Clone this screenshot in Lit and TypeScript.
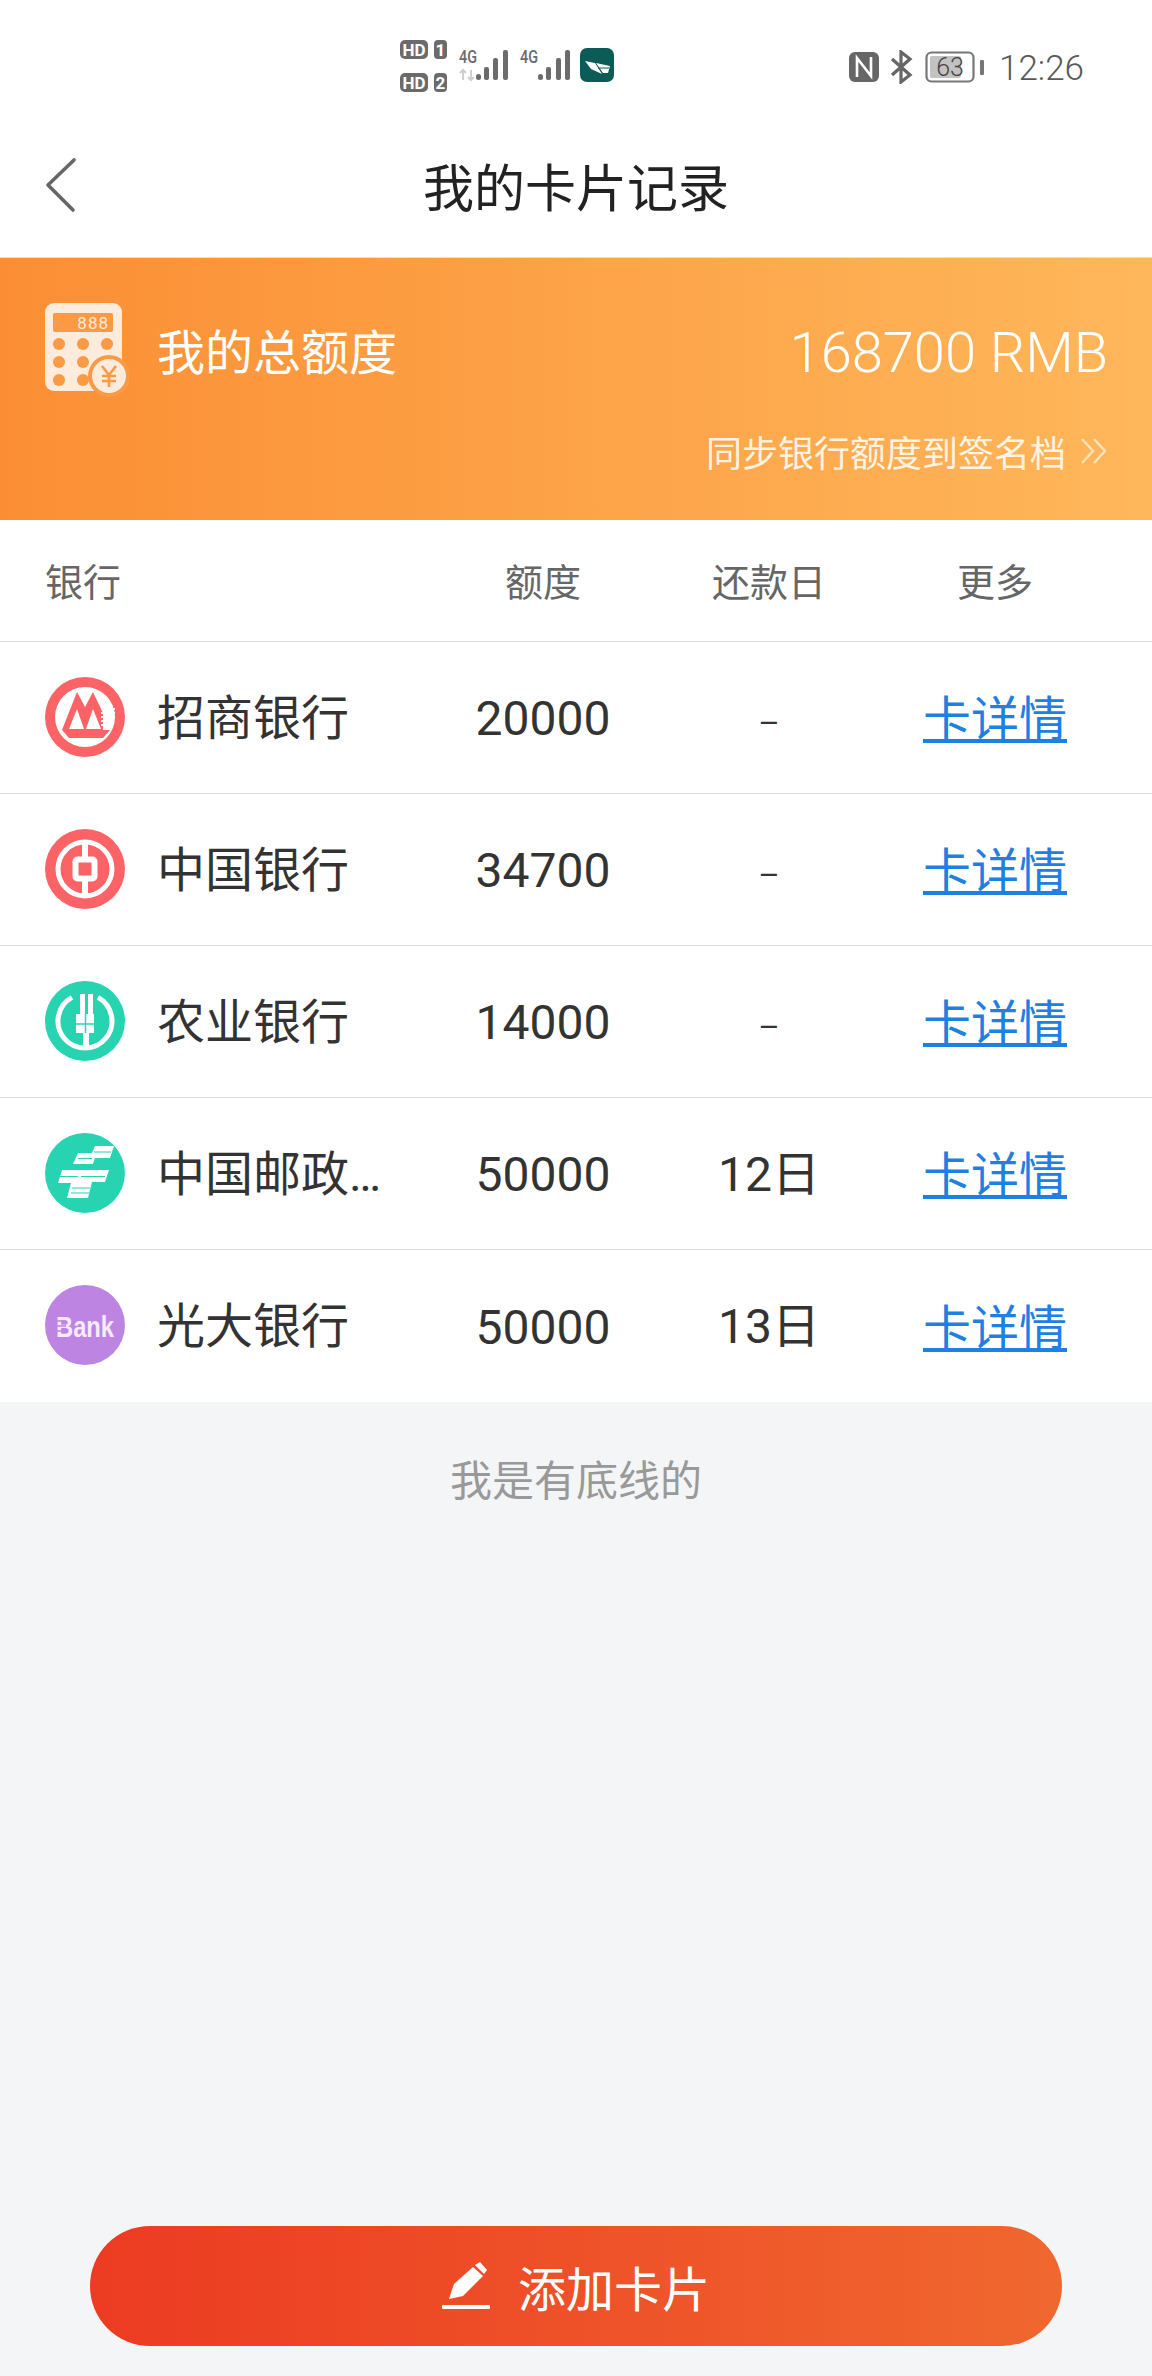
import { LitElement, html, css } from "lit";
import { customElement } from "lit/decorators.js";

const RED = "#fb6366";
const GREEN = "#27d3b1";
const PURPLE = "#bd84e2";

// logos are drawn on an 80x80 box
const logos: Record<string, unknown> = {
  cmb: html`<svg class="logo" viewBox="0 0 80 80">
    <circle cx="40" cy="40" r="40" fill="${RED}" />
    <circle cx="40" cy="40" r="30" fill="#fff" />
    <path d="M17 53 32 15 40 30 48 15 58 36V53L65 53 58 61H24Z" fill="${RED}" />
    <path d="M32 32 24 52H39ZM48 32 41 52H56Z" fill="#fff" />
    <path d="M56 32H70M56 36H70M56 40H70M56 44H69M56 48H67" stroke="#fff" stroke-width="1.8" />
  </svg>`,
  boc: html`<svg class="logo" viewBox="0 0 80 80">
    <circle cx="40" cy="40" r="40" fill="${RED}" />
    <circle cx="40" cy="40" r="27" fill="none" stroke="#fff" stroke-width="5" />
    <path d="M40 12V68" stroke="#fff" stroke-width="6" />
    <rect x="30.5" y="30.5" width="19" height="19" rx="2" fill="${RED}" stroke="#fff" stroke-width="6" />
  </svg>`,
  abc: html`<svg class="logo" viewBox="0 0 80 80">
    <circle cx="40" cy="40" r="40" fill="${GREEN}" />
    <path d="M27 16.4A27 27 0 1 0 53 16.4" fill="none" stroke="#fff" stroke-width="5" />
    <path d="M35 13H40V33H43V13H48V33H49V52H44V68H38V52H31V33H35Z" fill="#fff" />
    <path d="M31 43H49M40.5 33V52" fill="none" stroke="${GREEN}" stroke-width="1.4" />
  </svg>`,
  post: html`<svg class="logo" viewBox="0 0 80 80">
    <circle cx="40" cy="40" r="40" fill="${GREEN}" />
    <path d="M50 13H69L65 25H50L48 31H28L33 20H47ZM17 37H64L60 49H47L43 65H22L26 50H13Z" fill="#fff" />
    <path d="M49 19H66M33 25.5H47M15 43.5H33M36 43.5H60M27 55H45M26 60H44" fill="none" stroke="${GREEN}" stroke-width="1" />
  </svg>`,
  ceb: html`<svg class="logo" viewBox="0 0 80 80">
    <circle cx="40" cy="40" r="40" fill="${PURPLE}" />
    <text class="bank-word" x="11" y="52" textLength="58" lengthAdjust="spacingAndGlyphs">Bank</text>
    <path d="M11 36H21M11 41H21M11 46H21" stroke="${PURPLE}" stroke-width="1.3" />
  </svg>`,
};

const banks = [
  { logo: "cmb", name: "招商银行", limit: "20000", due: "-" },
  { logo: "boc", name: "中国银行", limit: "34700", due: "-" },
  { logo: "abc", name: "农业银行", limit: "14000", due: "-" },
  { logo: "post", name: "中国邮政储蓄银行", limit: "50000", due: "12日" },
  { logo: "ceb", name: "光大银行", limit: "50000", due: "13日" },
];

@customElement("app-root")
export class AppRoot extends LitElement {
  static styles = css`
    :host {
      display: block;
      font-family: "Noto Sans CJK SC", "Noto Sans", sans-serif;
      color: #333;
    }

    .page {
      display: flex;
      flex-direction: column;
      min-height: 2376px;
      background: #f4f5f7;
    }

    .status {
      display: flex;
      align-items: center;
      height: 66px;
      padding: 34px 68px 0 400px;
      background: #fff;
      color: #595959;
    }

    .status-left {
      width: 214px;
      height: 54px;
    }

    .status-right {
      display: flex;
      align-items: center;
      margin-left: auto;
      gap: 11px;
    }

    .time {
      margin: 3px 0 0 3px;
      font-family: Roboto, sans-serif;
      font-size: 35px;
      line-height: 40px;
      font-weight: 300;
    }

    .nav {
      display: grid;
      grid-template-columns: 1fr auto 1fr;
      align-items: center;
      height: 158px;
      padding: 0 45px;
      background: #fff;
      border-bottom: 1px solid #eadfd2;
      box-sizing: border-box;
    }

    .nav-back {
      width: 32px;
      height: 56px;
      margin-top: 12px;
    }

    .nav-title {
      font-size: 51px;
      line-height: 60px;
      color: #222;
      margin-top: 13px;
    }

    .banner {
      height: 262px;
      padding: 45px 44px 0 45px;
      box-sizing: border-box;
      background: linear-gradient(90deg, #fb8e34, #ffb75b);
      color: #fff;
    }

    .banner-top {
      display: flex;
      align-items: flex-start;
    }

    .calc {
      width: 84px;
      height: 94px;
    }

    .banner-title {
      margin-left: 28px;
      font-size: 48px;
      line-height: 92px;
    }

    .banner-total {
      margin-left: auto;
      font-family: Roboto, sans-serif;
      font-weight: 300;
      font-size: 56px;
      line-height: 100px;
    }

    .banner-sync {
      display: flex;
      justify-content: flex-end;
      align-items: center;
      gap: 14px;
      margin-top: 23px;
      font-size: 36px;
      line-height: 50px;
      color: #fff3e2;
    }

    .chevrons {
      width: 28px;
      height: 28px;
    }

    .row {
      display: grid;
      grid-template-columns: 385px 226px 226px 226px;
      align-items: center;
      height: 152px;
      padding: 0 44px 2px 45px;
      background: #fff;
      border-bottom: 1px solid #dcdcdc;
      box-sizing: border-box;
      font-size: 48px;
      text-align: center;
    }

    .row:last-child {
      border-bottom: 0;
    }

    .row.head {
      height: 122px;
      font-size: 38px;
      color: #666;
    }

    .head-bank {
      text-align: left;
    }

    .bank {
      display: flex;
      align-items: center;
      gap: 32px;
      text-align: left;
    }

    .logo {
      flex: none;
      width: 80px;
      height: 80px;
    }

    .bank-word {
      font-family: "Liberation Sans", sans-serif;
      font-size: 30px;
      font-weight: 700;
      fill: #f6eafc;
    }

    .bank-name {
      width: 240px;
      overflow: hidden;
      white-space: nowrap;
      text-overflow: ellipsis;
      font-family: Roboto, "Noto Sans CJK SC", sans-serif;
      line-height: 60px;
      margin-top: 4px;
    }

    .num {
      font-family: Roboto, sans-serif;
      margin-top: 4px;
    }

    .due {
      font-family: Roboto, "Noto Sans CJK SC", sans-serif;
      line-height: 60px;
      margin-top: 4px;
    }

    .dash {
      font-size: 36px;
    }

    .link {
      color: #1f80e2;
      text-decoration: underline;
      margin-bottom: 3px;
    }

    .bottom-line {
      margin-top: 46px;
      font-size: 42px;
      line-height: 60px;
      text-align: center;
      color: #999;
    }

    .add {
      display: flex;
      align-items: center;
      justify-content: center;
      gap: 28px;
      height: 120px;
      margin: auto 90px 30px;
      border-radius: 60px;
      background: linear-gradient(90deg, #ec3b22, #f0672f);
      color: #fff;
      font-size: 48px;
    }

    .pen {
      width: 48px;
      height: 48px;
    }
  `;

  render() {
    return html`
      <div class="page">
        <div class="status">
          <svg class="status-left" viewBox="0 0 214 54" fill="#6b6b6b">
            <rect x="0" y="0" width="28" height="19" rx="5" />
            <rect x="34" y="0" width="13" height="19" rx="4" />
            <rect x="0" y="33" width="28" height="19" rx="5" />
            <rect x="34" y="33" width="13" height="19" rx="4" />
            <g font-family="Roboto, sans-serif" font-weight="700" font-size="17" fill="#fff" text-anchor="middle">
              <text x="14" y="15.5">HD</text>
              <text x="40.5" y="15.5">1</text>
              <text x="14" y="48.5">HD</text>
              <text x="40.5" y="48.5">2</text>
            </g>
            <g font-family="Roboto, sans-serif" font-weight="500" font-size="18">
              <text x="59" y="23" textLength="18" lengthAdjust="spacingAndGlyphs">4G</text>
              <text x="120" y="23" textLength="18" lengthAdjust="spacingAndGlyphs">4G</text>
            </g>
            <path d="M63 30V40M60 33 63 30 66 33M71 30V40M68 37 71 40 74 37" fill="none" stroke="#cfcfcf" stroke-width="2" />
            <rect x="76" y="34" width="5" height="6" rx="2.5" />
            <rect x="84" y="27" width="5" height="13" rx="2" />
            <rect x="93" y="18" width="5" height="22" rx="2" />
            <rect x="103" y="10" width="5" height="30" rx="2" />
            <rect x="138" y="34" width="5" height="6" rx="2.5" />
            <rect x="146" y="27" width="5" height="13" rx="2" />
            <rect x="156" y="18" width="5" height="22" rx="2" />
            <rect x="165" y="10" width="5" height="30" rx="2" />
            <rect x="180" y="8" width="34" height="34" rx="7" fill="#0b5c57" />
            <path d="M185 21 195 23 202 34 191 29ZM196 23 210 26 208 33 203 33Z" fill="#fff" />
            <path d="M198 28 209 28" stroke="#0b5c57" stroke-width="1" />
          </svg>
          <div class="status-right">
            <svg width="30" height="30" viewBox="0 0 30 30">
              <rect width="30" height="30" rx="6" fill="#666" />
              <path d="M8 25V6L22 24V5" fill="none" stroke="#fff" stroke-width="2.6" />
            </svg>
            <svg width="24" height="34" viewBox="0 0 24 34" fill="none" stroke="#666" stroke-width="3.2">
              <path d="M2 9 20 25 11 32V2L20 9 2 25" />
            </svg>
            <svg width="60" height="32" viewBox="0 0 60 32">
              <rect x="1.5" y="1.5" width="47" height="29" rx="5" fill="#fff" stroke="#777" stroke-width="2.2" />
              <rect x="5" y="5" width="31" height="22" rx="2" fill="#c2c2c2" />
              <text x="25" y="25" text-anchor="middle" font-family="Roboto, sans-serif" font-weight="300" font-size="25" fill="#444">63</text>
              <rect x="55" y="9" width="4" height="15" rx="1" fill="#777" />
            </svg>
            <span class="time">12:26</span>
          </div>
        </div>

        <div class="nav">
          <svg class="nav-back" viewBox="0 0 32 56">
            <path d="M29 3 3 28 28 53" fill="none" stroke="#666" stroke-width="3.6" stroke-linecap="round" stroke-linejoin="round" />
          </svg>
          <div class="nav-title">我的卡片记录</div>
        </div>

        <div class="banner">
          <div class="banner-top">
            <svg class="calc" viewBox="0 0 84 94">
              <rect x="0" y="0" width="77" height="88" rx="9" fill="#fdebdc" />
              <rect x="8" y="10" width="60" height="19" rx="2" fill="#fb9a45" />
              <text x="64" y="26" text-anchor="end" font-family="Roboto, sans-serif" font-size="17" letter-spacing="1" fill="#fdebdc">888</text>
              <g fill="#fb9a45">
                <circle cx="14" cy="41" r="6" /><circle cx="38" cy="41" r="6" /><circle cx="62" cy="41" r="6" />
                <circle cx="14" cy="59" r="6" /><circle cx="38" cy="59" r="6" />
                <circle cx="14" cy="77" r="6" /><circle cx="38" cy="77" r="6" />
              </g>
              <circle cx="64" cy="73" r="21" fill="#fb9a45" />
              <circle cx="64" cy="73" r="17" fill="#fdebdc" />
              <path d="M57 63 64 72 71 63M64 72V84M57 73H71M57 78H71" fill="none" stroke="#fb9a45" stroke-width="2.6" />
            </svg>
            <span class="banner-title">我的总额度</span>
            <span class="banner-total">168700 RMB</span>
          </div>
          <div class="banner-sync">
            <span>同步银行额度到签名档</span>
            <svg class="chevrons" viewBox="0 0 28 28" fill="none" stroke="#ffe3bd" stroke-width="2.4">
              <path d="M2 2 13 14 2 26M14 2 25 14 14 26" />
            </svg>
          </div>
        </div>

        <div class="table">
          <div class="row head">
            <span class="head-bank">银行</span>
            <span>额度</span>
            <span>还款日</span>
            <span>更多</span>
          </div>
          ${banks.map(
            (b) => html`
              <div class="row">
                <div class="bank">
                  ${logos[b.logo]}
                  <span class="bank-name">${b.name}</span>
                </div>
                <span class="num">${b.limit}</span>
                ${b.due === "-" ? html`<span class="dash">–</span>` : html`<span class="due">${b.due}</span>`}
                <span class="link">卡详情</span>
              </div>
            `
          )}
        </div>

        <div class="bottom-line">我是有底线的</div>

        <div class="add">
          <svg class="pen" viewBox="0 0 48 48" fill="#fff">
            <path d="M7 37 12 22 31 5 41 14 21 34Z" />
            <path d="M33 3 38 0 45 8 42 12Z" />
            <rect x="0" y="43" width="48" height="4" rx="1" />
          </svg>
          <span>添加卡片</span>
        </div>
      </div>
    `;
  }
}
